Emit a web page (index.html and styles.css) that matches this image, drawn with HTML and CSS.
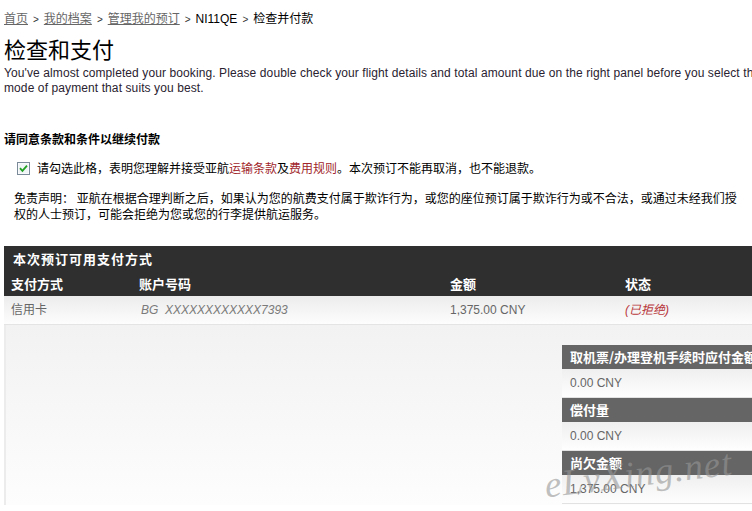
FILE: index.html
```
<!DOCTYPE html>
<html lang="zh-CN">
<head>
<meta charset="utf-8">
<title>检查和支付</title>
<link rel="stylesheet" href="styles.css">
</head>
<body>
<div class="page">
  <div class="crumbs">
    <a href="#">首页</a><span class="sep">&gt;</span><a href="#">我的档案</a><span class="sep">&gt;</span><a href="#">管理我的预订</a><span class="sep">&gt;</span><span>NI11QE</span><span class="sep">&gt;</span><span>检查并付款</span>
  </div>
  <h1 class="title">检查和支付</h1>
  <p class="intro">You've almost completed your booking. Please double check your flight details and total amount due on the right panel before you select the mode of payment that suits you best.</p>

  <h2 class="agree-title">请同意条款和条件以继续付款</h2>
  <div class="agree">
    <span class="cbox"><svg width="13" height="13" viewBox="0 0 13 13"><rect x="0.5" y="0.5" width="12" height="12" fill="#fff" stroke="#7a8a99"/><rect x="1.5" y="1.5" width="10" height="10" fill="#f1f4f6"/><path d="M3 6.2 L5.4 8.8 L10 3.6" fill="none" stroke="#21a121" stroke-width="1.8"/></svg></span>
    <span>请勾选此格，表明您理解并接受亚航<a class="red" href="#">运输条款</a>及<a class="red" href="#">费用规则</a>。本次预订不能再取消，也不能退款。</span>
  </div>
  <p class="disclaimer">免责声明： 亚航在根据合理判断之后，如果认为您的航费支付属于欺诈行为，或您的座位预订属于欺诈行为或不合法，或通过未经我们授权的人士预订，可能会拒绝为您或您的行李提供航运服务。</p>

  <div class="pay">
    <div class="pay-head">本次预订可用支付方式</div>
    <div class="grid cols">
      <div>支付方式</div><div>账户号码</div><div>金额</div><div>状态</div>
    </div>
    <div class="grid row">
      <div>信用卡</div><div class="acct">BG&nbsp; XXXXXXXXXXXX7393</div><div>1,375.00 CNY</div><div class="declined">(已拒绝)</div>
    </div>
    <div class="lower">
      <div class="summary">
        <div class="s-head">取机票/办理登机手续时应付金额</div>
        <div class="s-val">0.00 CNY</div>
        <div class="s-head">偿付量</div>
        <div class="s-val">0.00 CNY</div>
        <div class="s-head">尚欠金额</div>
        <div class="s-val">1,375.00 CNY</div>
      </div>
    </div>
  </div>
</div>
<div class="watermark">eLvXing.net</div>
</body>
</html>
```
FILE: styles.css
```
html, body {
  margin: 0;
  padding: 0;
  background: #fff;
  overflow: hidden;
}
body {
  font-family: "Liberation Sans", Arial, "Noto Sans CJK SC", sans-serif;
  font-size: 12px;
  color: #000;
  width: 752px;
  height: 511px;
  position: relative;
}
.page {
  width: 790px;
  padding: 11px 0 0 4px;
}
.crumbs {
  line-height: 16px;
  height: 16px;
  color: #000;
}
.crumbs a {
  color: #666;
  text-decoration: underline;
}
.crumbs .sep {
  font-size: 10px;
  color: #333;
  margin: 0 5px;
}
.title {
  margin: 8px 0 0;
  font-size: 22px;
  line-height: 26px;
  font-weight: normal;
  font-family: "Noto Sans CJK SC", sans-serif;
}
.intro {
  margin: 5px 0 0;
  line-height: 15px;
  color: #2a2230;
  width: 775px;
  letter-spacing: 0.1px;
}
.agree-title {
  margin: 35px 0 0;
  font-size: 12px;
  line-height: 16px;
  font-weight: bold;
  font-family: "Noto Sans CJK SC", sans-serif;
}
.agree {
  margin: 13px 0 0 13px;
  display: flex;
  align-items: center;
  gap: 7px;
  line-height: 16px;
  font-family: "Noto Sans CJK SC", sans-serif;
}
.cbox {
  display: flex;
  width: 13px;
  height: 13px;
}
.red {
  color: #a1262b;
  text-decoration: none;
}
.disclaimer {
  margin: 14px 0 0 10px;
  width: 732px;
  line-height: 16px;
  font-family: "Noto Sans CJK SC", sans-serif;
}
.pay {
  margin-top: 24px;
}
.pay-head {
  background: #2f2f2f;
  color: #fff;
  font-weight: bold;
  font-size: 13px;
  letter-spacing: 1px;
  height: 26px;
  line-height: 26px;
  padding-left: 9px;
  font-family: "Noto Sans CJK SC", sans-serif;
}
.grid {
  display: grid;
  grid-template-columns: 128px 311px 175px 1fr;
}
.grid > div {
  padding-left: 7px;
}
.cols {
  background: #2f2f2f;
  color: #fff;
  font-weight: bold;
  font-size: 13px;
  height: 24px;
  line-height: 24px;
  font-family: "Noto Sans CJK SC", sans-serif;
}
.row {
  height: 28px;
  line-height: 28px;
  color: #666;
  background: linear-gradient(#ececec, #fdfdfd);
  border-bottom: 1px solid #e4e4e4;
}
.row .acct {
  font-style: italic;
  color: #7a7a7a;
  padding-left: 9px;
}
.row .declined {
  font-style: italic;
  color: #b8383d;
}
.lower {
  height: 180px;
  box-sizing: border-box;
  padding-top: 20px;
  background: linear-gradient(#f2f2f2, #fdfdfd);
  border-left: 2px solid #ececec;
  display: flex;
  justify-content: flex-end;
}
.summary {
  width: 232px;
}
.s-head {
  background: #656565;
  color: #fff;
  font-weight: bold;
  font-size: 13px;
  height: 24px;
  line-height: 24px;
  padding-left: 8px;
  white-space: nowrap;
  font-family: "Noto Sans CJK SC", sans-serif;
}
.s-val {
  height: 28px;
  line-height: 28px;
  padding-left: 8px;
  color: #666;
  background: linear-gradient(#efefef, #fefefe);
  border-bottom: 1px solid #e2e2e2;
}
.watermark {
  position: absolute;
  left: 544px;
  top: 452px;
  font-family: "Liberation Serif", serif;
  font-style: italic;
  font-size: 37px;
  letter-spacing: 1px;
  color: rgba(150, 150, 150, 0.6);
  transform: rotate(-7deg);
  pointer-events: none;
}
```
